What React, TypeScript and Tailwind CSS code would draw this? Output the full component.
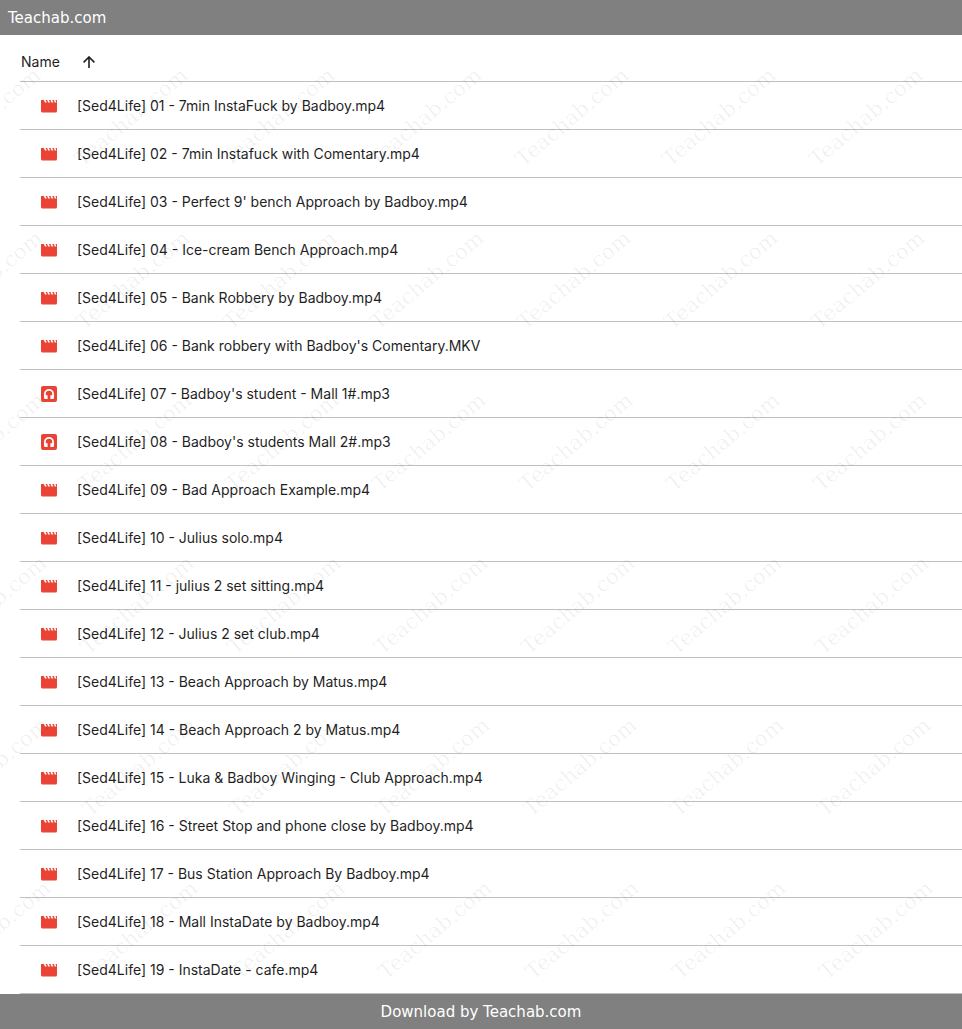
const files: string[] = [
  '01 - 7min InstaFuck by Badboy.mp4',
  '02 - 7min Instafuck with Comentary.mp4',
  "03 - Perfect 9' bench Approach by Badboy.mp4",
  '04 - Ice-cream Bench Approach.mp4',
  '05 - Bank Robbery by Badboy.mp4',
  "06 - Bank robbery with Badboy's Comentary.MKV",
  "07 - Badboy's student - Mall 1#.mp3",
  "08 - Badboy's students Mall 2#.mp3",
  '09 - Bad Approach Example.mp4',
  '10 - Julius solo.mp4',
  '11 - julius 2 set sitting.mp4',
  '12 - Julius 2 set club.mp4',
  '13 - Beach Approach by Matus.mp4',
  '14 - Beach Approach 2 by Matus.mp4',
  '15 - Luka & Badboy Winging - Club Approach.mp4',
  '16 - Street Stop and phone close by Badboy.mp4',
  '17 - Bus Station Approach By Badboy.mp4',
  '18 - Mall InstaDate by Badboy.mp4',
  '19 - InstaDate - cafe.mp4',
];

function VideoIcon() {
  return (
    <svg viewBox="0 0 16 16" className="block size-4" aria-hidden="true">
      <path d="M0 2h16v11a1.500 1.500 0 0 1-1.500 1.500h-13A1.500 1.500 0 0 1 0 13z" fill="#ea4335" />
      <path
        d="M2.600 1.500h1.700l1.500 3H4zM5.900 1.500h1.700l1.500 3H7.300zM9.200 1.500h1.700l1.500 3h-1.800zM12.500 1.500h1.700l1.300 3h-1.600z"
        fill="#fff"
      />
    </svg>
  );
}

function AudioIcon() {
  return (
    <svg viewBox="0 0 16 16" className="block size-4" aria-hidden="true">
      <rect width="16" height="16" rx="2" fill="#ea4335" />
      <path
        d="M7 13H4.500A1.500 1.500 0 0 1 3 11.500V8a5 5 0 0 1 10 0v3.500a1.500 1.500 0 0 1-1.500 1.500H9V9.300h2.200V8a3.200 3.200 0 0 0-6.400 0v1.300H7z"
        fill="#fff"
      />
      <path d="M6.600 9h2.800v4.500H6.600z" fill="#ea4335" />
    </svg>
  );
}

function SortArrow() {
  return (
    <svg viewBox="0 0 12 12" className="block size-3 fill-none stroke-[#1f1f1f]" strokeWidth="1.6" aria-hidden="true">
      <path d="M6 12V1.200M.6 6.400 6 1l5.400 5.400" />
    </svg>
  );
}

const markRows = [0, 1, 2, 3, 4, 5];
const markColumns = [-6, -5, -4, -3, -2, -1, 0];

function Watermark() {
  return (
    <div className="pointer-events-none absolute inset-0 overflow-hidden select-none" aria-hidden="true">
      {markRows.map((row) =>
        markColumns.map((column) => (
          <span
            key={`${row}:${column}`}
            className="absolute -translate-x-1/2 -translate-y-1/2 -rotate-40 font-['DejaVu_Serif',serif] text-[21px] leading-6 text-black/6"
            style={{ left: 866 + column * 147 + row * 2, top: 82 + Math.round(row * 162.5) }}
          >
            Teachab.com
          </span>
        )),
      )}
    </div>
  );
}

export default function App() {
  return (
    <div className="bg-white font-['Inter',sans-serif] text-sm text-[#1f1f1f]">
      <header className="bg-[#808080] px-2 pt-px font-['DejaVu_Sans',sans-serif] text-[15px] leading-[34px] text-white">
        Teachab.com
      </header>
      <main className="relative pl-5">
        <table className="w-full border-separate border-spacing-0">
          <thead>
            <tr>
              <th scope="col" className="h-[47px] border-b border-[#c0c0c0] p-0 pt-2 text-left font-normal">
                <button type="button" className="flex items-center gap-[23px] pl-px">
                  Name
                  <SortArrow />
                </button>
              </th>
            </tr>
          </thead>
          <tbody>
            {files.map((file) => (
              <tr key={file}>
                <td className="h-12 border-b border-[#c0c0c0] p-0 pt-px">
                  <div className="flex items-center gap-5 pl-[21px]">
                    {file.endsWith('.mp3') ? <AudioIcon /> : <VideoIcon />}
                    <span>[Sed4Life] {file}</span>
                  </div>
                </td>
              </tr>
            ))}
          </tbody>
        </table>
        <Watermark />
      </main>
      <footer className="bg-[#808080] pt-px text-center font-['DejaVu_Sans',sans-serif] text-[15px] leading-[34px] text-white">
        Download by Teachab.com
      </footer>
    </div>
  );
}
